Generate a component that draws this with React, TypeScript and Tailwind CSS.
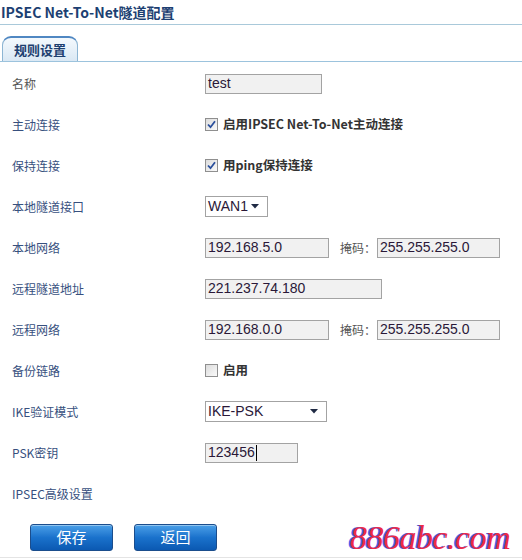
import React from "react";

const cjk = "font-['Noto_Sans_CJK_SC','Liberation_Sans',sans-serif]";
const mono = "font-['Liberation_Sans','Noto_Sans_CJK_SC',sans-serif]";

function Check({ checked }: { checked: boolean }) {
  return (
    <span className="flex h-[13px] w-[13px] items-center justify-center border border-[#8f8f8f] bg-gradient-to-br from-[#dcdcdc] to-[#fafafa]">
      {checked && (
        <svg width="9" height="9" viewBox="0 0 9 9">
          <path d="M1 4.5 L3.5 7.2 L8 1.2" fill="none" stroke="#2a4f9c" strokeWidth="1.8" />
        </svg>
      )}
    </span>
  );
}

function Box({ value, w, caret }: { value: string; w: string; caret?: boolean }) {
  return (
    <div className={`flex h-[20px] ${w} items-center border border-[#a3a3a3] bg-[#f1f1f1] pl-[2px] text-[14px] text-[#2a1838] ${mono}`}>
      {value}
      {caret && <span className="ml-[1px] h-[16px] w-px bg-black" />}
    </div>
  );
}

function Select({ value, w }: { value: string; w: string }) {
  return (
    <div className={`flex h-[21px] ${w} items-center justify-between border border-[#a3a3a3] bg-white pl-[2px] pr-[8px] text-[14px] text-[#2a1838] ${mono}`}>
      {value}
      <svg width="8" height="5" viewBox="0 0 8 5">
        <path d="M0 0 H8 L4 4.5 Z" fill="#1f2a44" />
      </svg>
    </div>
  );
}

function Row({ label, children, gray }: { label: string; children?: React.ReactNode; gray?: boolean }) {
  return (
    <div className="flex h-[41px] items-center">
      <div className={`w-[205px] shrink-0 pl-[12px] text-[12px] ${gray ? "text-[#555]" : "text-[#37507e]"}`}>{label}</div>
      <div className="flex items-center">{children}</div>
    </div>
  );
}

export default function App() {
  return (
    <div className={`relative h-[560px] w-[522px] overflow-hidden bg-white ${cjk}`}>
      <div className="h-[25px] border-b border-[#a9c9da] pl-[1px] pt-[2px]">
        <h1 className={`text-[14px] font-bold leading-[20px] text-[#1c3f72] ${cjk}`}>IPSEC Net-To-Net隧道配置</h1>
      </div>

      <div className="mt-[11px] flex h-[26px] items-end border-b border-[#9cc3dd]">
        <div className="ml-[2px] flex h-[25px] w-[76px] items-center justify-center rounded-t-[9px] border border-b-0 border-[#8db5d3] border-t-2 border-t-[#4f87c2] bg-gradient-to-b from-[#f4f9fd] to-[#dae8f4] text-[13px] font-bold text-[#1d3f70]">
          规则设置
        </div>
      </div>

      <div className="mt-[1px]">
        <Row label="名称" gray>
          <Box value="test" w="w-[117px]" />
        </Row>
        <Row label="主动连接">
          <Check checked />
          <span className="ml-[5px] text-[12.5px] font-bold text-[#333]">启用IPSEC Net-To-Net主动连接</span>
        </Row>
        <Row label="保持连接">
          <Check checked />
          <span className="ml-[5px] text-[12.5px] font-bold text-[#333]">用ping保持连接</span>
        </Row>
        <Row label="本地隧道接口">
          <Select value="WAN1" w="w-[63px]" />
        </Row>
        <Row label="本地网络">
          <Box value="192.168.5.0" w="w-[124px]" />
          <span className="ml-[11px] mr-[1px] text-[12px] text-[#555]">掩码：</span>
          <Box value="255.255.255.0" w="w-[123px]" />
        </Row>
        <Row label="远程隧道地址">
          <Box value="221.237.74.180" w="w-[177px]" />
        </Row>
        <Row label="远程网络">
          <Box value="192.168.0.0" w="w-[124px]" />
          <span className="ml-[11px] mr-[1px] text-[12px] text-[#555]">掩码：</span>
          <Box value="255.255.255.0" w="w-[123px]" />
        </Row>
        <Row label="备份链路">
          <Check checked={false} />
          <span className="ml-[5px] text-[12.5px] font-bold text-[#333]">启用</span>
        </Row>
        <Row label="IKE验证模式">
          <Select value="IKE-PSK" w="w-[122px]" />
        </Row>
        <Row label="PSK密钥">
          <Box value="123456" w="w-[93px]" caret />
        </Row>
        <Row label="IPSEC高级设置" />
      </div>

      <div className="mt-[10px] flex gap-[21px] pl-[30px]">
        {["保存", "返回"].map((t) => (
          <button
            key={t}
            className="flex h-[27px] w-[83px] items-center justify-center rounded-[3px] border border-[#1b4d8c] bg-gradient-to-b from-[#4aa0e8] via-[#1a72cc] to-[#0b59b2] text-[15px] text-white shadow-[inset_0_1px_0_rgba(255,255,255,0.4)]"
          >
            {t}
          </button>
        ))}
      </div>

      <div className="absolute bottom-[2px] left-0 right-0 h-px bg-[#e4e4e4]" />

      <div className="absolute bottom-[3px] left-[350px] font-['Liberation_Serif',serif] text-[34px] italic leading-[38px] tracking-[-0.5px] text-[#ee2a48] [text-shadow:-2px_0_0_#4a5ee8]">
        886abc.com
      </div>
    </div>
  );
}
